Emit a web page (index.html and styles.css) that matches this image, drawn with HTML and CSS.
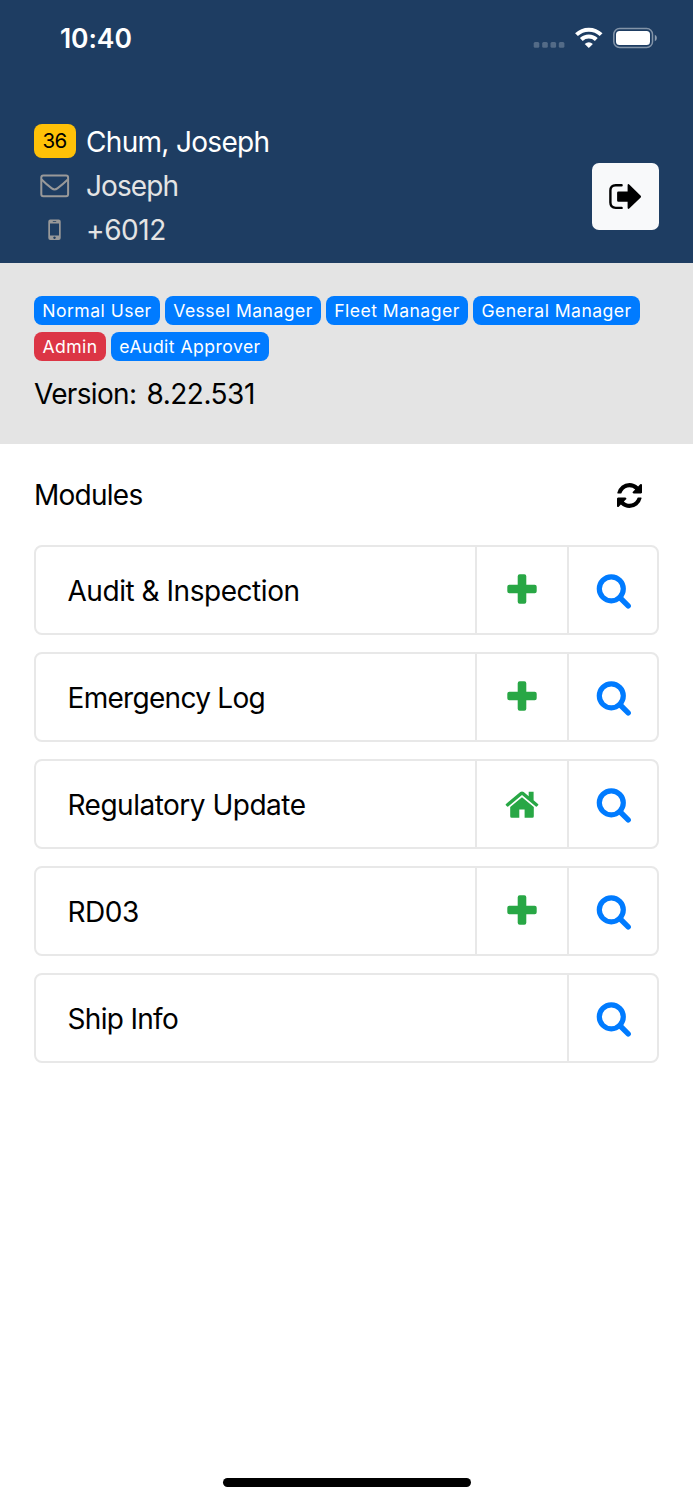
FILE: index.html
```html
<!DOCTYPE html>
<html lang="en">
<head>
<meta charset="utf-8">
<title>Modules</title>
<link rel="stylesheet" href="styles.css">
</head>
<body>
<svg class="symbols" aria-hidden="true">
  <symbol id="plus" viewBox="0 0 30 30"><path d="M12.700 .3h4.600a2 2 0 0 1 2 2v8.400h8.400a2 2 0 0 1 2 2v4.600a2 2 0 0 1-2 2h-8.400v8.400a2 2 0 0 1-2 2h-4.600a2 2 0 0 1-2-2v-8.400H2.300a2 2 0 0 1-2-2v-4.600a2 2 0 0 1 2-2h8.400V2.300a2 2 0 0 1 2-2z"/></symbol>
  <symbol id="search" viewBox="0 0 36 36"><circle cx="15.300" cy="14.800" r="12" fill="none" stroke="currentColor" stroke-width="5.200"/><path d="M23.800 23.500l8.400 8.400" stroke="currentColor" stroke-width="5.400" stroke-linecap="round"/></symbol>
  <symbol id="home" viewBox="0 0 34 28"><path d="M17 6.200L28.800 16v9.300a1.500 1.500 0 0 1-1.500 1.500h-7.700v-8.300h-5.300v8.300H6.700a1.500 1.500 0 0 1-1.500-1.500V16z"/><path d="M15.300 1.100q1.700-1.400 3.400 0L23.700 5.200V.8h4.900v8.400l4.400 3.700q.7.600.1 1.300l-1 1.100q-.6.600-1.300.1L17 4.100 3.200 15.400q-.7.500-1.300-.1l-1-1.100q-.6-.7.100-1.300z"/></symbol>
</svg>
<div class="phone">
  <header class="profile">
    <div class="status">
      <time class="clock">10:40</time>
      <svg class="signals" width="130" height="30" viewBox="0 0 130 30">
        <g fill="#fff" fill-opacity=".24"><rect x="3.700" y="17" width="5.600" height="5.800" rx="1.500"/><rect x="12.200" y="17" width="5.600" height="5.800" rx="1.500"/><rect x="20.500" y="17" width="5.600" height="5.800" rx="1.500"/><rect x="28.800" y="17" width="5.600" height="5.800" rx="1.500"/></g>
        <g fill="none" stroke="#fff" stroke-width="4"><path d="M46.500 9.700a17.500 17.500 0 0 1 24.600 0"/><path d="M51.300 14.500a10.700 10.700 0 0 1 15 0"/></g>
        <path d="M54.700 18.900q4.100-3.200 8.200 0l-4.100 4.200z" fill="#fff"/>
        <rect x="83.800" y="3.500" width="38.700" height="19" rx="5.800" fill="none" stroke="#fff" stroke-opacity=".45" stroke-width="1.500"/>
        <rect x="86" y="6" width="34" height="14" rx="3.500" fill="#fff"/>
        <path d="M124.800 9.700q2.100 1 2.100 3.300t-2.100 3.300z" fill="#fff" fill-opacity=".5"/>
      </svg>
    </div>
    <div class="identity">
      <div class="contact">
        <div class="line name"><span class="mark"><b class="count">36</b></span><span class="t-name">Chum, Joseph</span></div>
        <div class="line"><span class="mark"><svg width="30" height="24" viewBox="0 0 30 24" fill="none" stroke="#999" stroke-width="2" stroke-linejoin="round"><rect x="1.300" y="1.600" width="26.800" height="20.600" rx="2"/><path d="M1.600 5.500q5 5 10.200 8.900 2.800 2.100 5.600 0Q22.600 10.500 27.800 5.500"/></svg></span><span class="t-user">Joseph</span></div>
        <div class="line"><span class="mark"><svg width="14" height="22" viewBox="0 0 14 22"><path fill="#999" fill-rule="evenodd" d="M2.300.5h8.400a2 2 0 0 1 2 2v16.400a2 2 0 0 1-2 2H2.300a2 2 0 0 1-2-2V2.500a2 2 0 0 1 2-2zM2 4.600v11.800h9V4.600zM4.800 2.200v.8h3.400v-.8zM6.500 17.400a1.250 1.250 0 1 0 .01 0z"/></svg></span><span class="t-phone">+6012</span></div>
      </div>
      <button class="logout" aria-label="Log out"><svg width="34" height="28" viewBox="0 0 34 28"><path d="M12.600 2.300H6.700Q1.400 2.300 1.400 7.600v12q0 5.300 5.300 5.300h5.900" fill="none" stroke="#000" stroke-width="2.400" stroke-linecap="round"/><path d="M9.400 8.400h9.200V2.600q0-2.400 1.900-.9L31.700 12.700q.8.900 0 1.800L20.500 25.300q-1.900 1.500-1.900-.9V18.700H9.400q-1.300 0-1.300-1.300V9.700q0-1.300 1.300-1.300z"/></svg></button>
    </div>
  </header>
  <section class="account">
    <div class="roles">
      <span class="role r1">Normal User</span><span class="role r2">Vessel Manager</span><span class="role r3">Fleet Manager</span><span class="role r4">General Manager</span><span class="role admin r5">Admin</span><span class="role r6">eAudit Approver</span>
    </div>
    <div class="version">Version: <span class="number">8.22.531</span></div>
  </section>
  <main class="modules">
    <div class="heading"><span class="t-modules">Modules</span><svg width="25" height="25" viewBox="0 128 1536 1536"><path d="M1511 1056q0 5-1 7-64 268-268 434.500t-478 166.500q-146 0-282.500-55t-243.500-157l-129 129q-19 19-45 19t-45-19-19-45v-448q0-26 19-45t45-19h448q26 0 45 19t19 45-19 45l-137 137q71 66 161 102t187 36q134 0 250-65t186-179q11-17 53-117 8-23 30-23h192q13 0 22.500 9.500t9.500 22.500zm25-800v448q0 26-19 45t-45 19h-448q-26 0-45-19t-19-45 19-45l138-138q-148-137-349-137-134 0-250 65t-186 179q-11 17-53 117-8 23-30 23h-199q-13 0-22.500-9.500t-9.500-22.500v-7q65-268 270-434.500t480-166.500q146 0 284 55.500t245 156.500l130-129q19-19 45-19t45 19 19 45z"/></svg></div>
    <div class="list">
      <div class="card"><span class="label l1">Audit &amp; Inspection</span><a class="cell add"><svg class="plus"><use href="#plus"/></svg></a><a class="cell find"><svg class="search"><use href="#search"/></svg></a></div>
      <div class="card"><span class="label l2">Emergency Log</span><a class="cell add"><svg class="plus"><use href="#plus"/></svg></a><a class="cell find"><svg class="search"><use href="#search"/></svg></a></div>
      <div class="card"><span class="label l3">Regulatory Update</span><a class="cell add"><svg class="home"><use href="#home"/></svg></a><a class="cell find"><svg class="search"><use href="#search"/></svg></a></div>
      <div class="card"><span class="label l4">RD03</span><a class="cell add"><svg class="plus"><use href="#plus"/></svg></a><a class="cell find"><svg class="search"><use href="#search"/></svg></a></div>
      <div class="card"><span class="label l5">Ship Info</span><a class="cell find"><svg class="search"><use href="#search"/></svg></a></div>
    </div>
  </main>
  <footer class="home-bar"><i></i></footer>
</div>
</body>
</html>
```
FILE: styles.css
```css
* { box-sizing: border-box; }
body { margin: 0; background: #fff; color: #000; font: 28px/34px Inter, "Liberation Sans", sans-serif; }
svg { display: block; flex: none; }
.symbols { width: 0; height: 0; position: absolute; }
.phone { width: 693px; height: 1500px; display: flex; flex-direction: column; }

.profile { height: 263px; background: #1e3d62; color: #fff; }
.status { height: 119px; padding: 21px 33px 0 60px; display: flex; justify-content: space-between; align-items: flex-start; }
.clock { font-size: 26.5px; font-weight: 600; letter-spacing: -.1px; }
.signals { margin-top: 4px; }
.identity { padding: 0 34px; display: flex; justify-content: space-between; }
.contact { display: flex; flex-direction: column; }
.line { height: 44px; display: flex; align-items: center; gap: 10px; color: #e4e4e4; white-space: nowrap; }
.line > span:last-child { padding-top: 1px; }
.line svg { margin-top: 2px; }
.name { color: #fff; }
.mark { width: 42px; display: flex; justify-content: center; }
.count { width: 42px; height: 34px; padding-right: 1px; border-radius: 8px; background: #ffc107; color: #000; font-weight: 400; font-size: 20.5px; text-align: center; letter-spacing: -.6px; }
.t-name { letter-spacing: -.68px; }
.t-user { letter-spacing: -.9px; }
.t-phone { letter-spacing: -.4px; }
.logout { margin: 44px 0 0; padding: 0; width: 67px; height: 67px; border: 0; border-radius: 7px; background: #f8f9fa; display: flex; align-items: center; justify-content: center; }

.account { height: 181px; padding: 33px 34px 0; background: #e4e4e4; }
.roles { display: flex; flex-wrap: wrap; gap: 7px 5px; margin-right: -10px; }
.role { height: 29px; border-radius: 8px; background: #007bff; color: #fff; font-size: 17.6px; line-height: 29px; text-align: center; letter-spacing: .45px; white-space: nowrap; }
.admin { background: #dc3545; }
.r1 { width: 126px; }
.r2 { width: 156px; }
.r3 { width: 142px; }
.r4 { width: 167px; }
.r5 { width: 72px; }
.r6 { width: 158px; }
.version { margin-top: 16px; letter-spacing: -.68px; }
.number { margin-left: 3px; letter-spacing: -.5px; }

.modules { flex: 1; padding: 34px 34px 0; }
.heading { height: 34px; padding-right: 17px; display: flex; align-items: center; justify-content: space-between; }
.t-modules { letter-spacing: -.75px; }
.list { margin-top: 33px; display: flex; flex-direction: column; gap: 17px; }
.card { height: 90px; border: 2px solid #e8e8e8; border-radius: 8px; display: flex; align-items: stretch; }
.label { flex: 1; padding-left: 31.5px; line-height: 88px; letter-spacing: -.5px; white-space: nowrap; }
.l1 { letter-spacing: -.46px; }
.l2 { letter-spacing: -.7px; }
.l3 { letter-spacing: -.5px; }
.l5 { letter-spacing: -.68px; }
.cell { border-left: 2px solid #e8e8e8; display: flex; align-items: center; justify-content: center; }
.add { width: 92px; color: #28a745; fill: #28a745; padding: 0 0 2px; }
.find { width: 90px; color: #007bff; padding: 3px 0 0 2px; }
.plus { width: 30px; height: 30px; }
.search { width: 36px; height: 36px; }
.home { width: 34px; height: 28px; margin-top: 3px; }

.home-bar { height: 22px; display: flex; justify-content: center; }
.home-bar i { width: 248px; height: 9px; border-radius: 5px; background: #000; }
```
